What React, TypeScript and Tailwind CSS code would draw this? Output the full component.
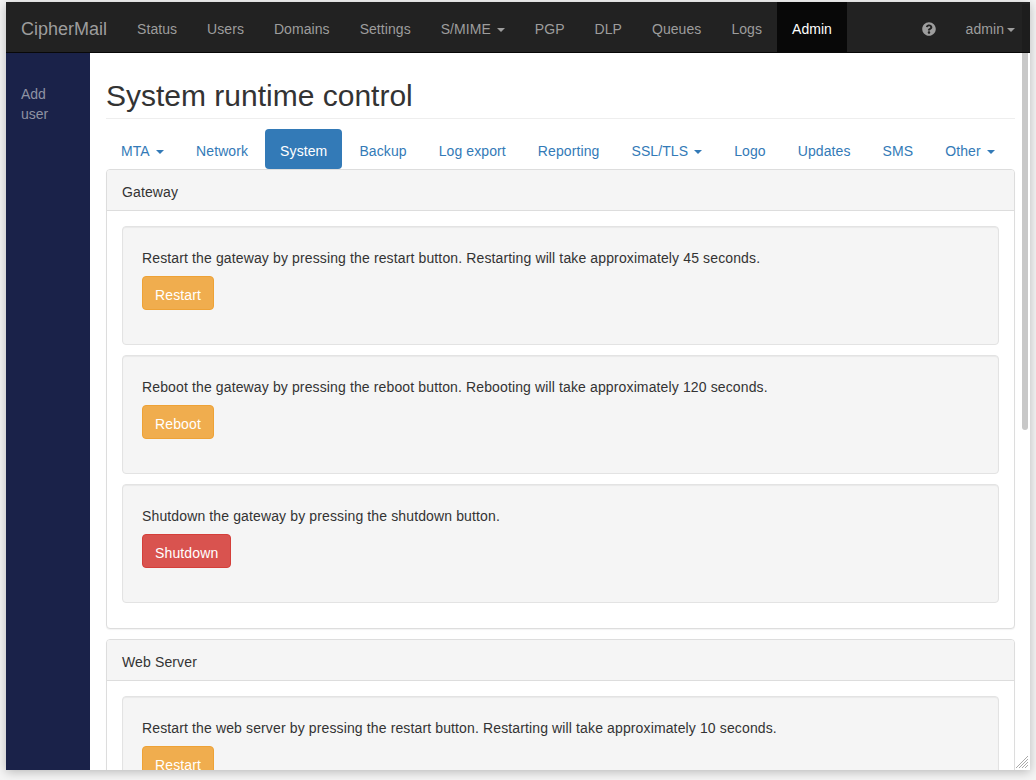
import React from 'react';
import { FaQuestionCircle } from 'react-icons/fa';

const navItems = [
  { label: 'Status' },
  { label: 'Users' },
  { label: 'Domains' },
  { label: 'Settings' },
  { label: 'S/MIME', caret: true },
  { label: 'PGP' },
  { label: 'DLP' },
  { label: 'Queues' },
  { label: 'Logs' },
  { label: 'Admin', active: true },
];

const tabs = [
  { label: 'MTA', caret: true, wide: true },
  { label: 'Network' },
  { label: 'System', active: true },
  { label: 'Backup' },
  { label: 'Log export' },
  { label: 'Reporting' },
  { label: 'SSL/TLS', caret: true },
  { label: 'Logo' },
  { label: 'Updates' },
  { label: 'SMS' },
  { label: 'Other', caret: true },
];

const gatewayActions = [
  { text: 'Restart the gateway by pressing the restart button. Restarting will take approximately 45 seconds.', button: 'Restart' },
  { text: 'Reboot the gateway by pressing the reboot button. Rebooting will take approximately 120 seconds.', button: 'Reboot' },
  { text: 'Shutdown the gateway by pressing the shutdown button.', button: 'Shutdown', danger: true },
];

function Caret({ wide }: { wide?: boolean }) {
  return (
    <span
      className={
        wide
          ? 'ml-[3px] inline-block h-0 w-0 border-x-4 border-t-4 border-x-transparent border-t-current align-middle'
          : 'ml-[2px] inline-block h-0 w-0 border-x-4 border-t-4 border-x-transparent border-t-current align-middle'
      }
    />
  );
}

function ActionWell({ text, button, danger }: { text: string; button: string; danger?: boolean }) {
  return (
    <div className="mb-[10px] rounded border border-[#e3e3e3] bg-[#f5f5f5] p-[19px] shadow-[inset_0_1px_1px_rgba(0,0,0,0.05)]">
      <p className="mb-[8px] pt-[2px] text-[#333]">{text}</p>
      <div className="mb-[15px]">
        <button
          className={
            danger
              ? 'h-[34px] rounded border border-[#d43f3a] bg-[#d9534f] px-3 pt-[4px] text-white'
              : 'h-[34px] rounded border border-[#eea236] bg-[#f0ad4e] px-3 pt-[4px] text-white'
          }
        >
          {button}
        </button>
      </div>
    </div>
  );
}

function Panel({ title, children }: { title: string; children: React.ReactNode }) {
  return (
    <div className="mb-[10px] rounded border border-[#ddd] bg-white shadow-[0_1px_1px_rgba(0,0,0,0.05)]">
      <div className="h-[41px] rounded-t-[3px] border-b border-[#ddd] bg-[#f5f5f5] px-[15px] pb-[8px] pt-[12px] text-[#333]">{title}</div>
      <div className="p-[15px]">{children}</div>
    </div>
  );
}

export default function App() {
  return (
    <div className="h-[780px] w-[1036px] overflow-hidden bg-[#f5f5f5] pl-[6px] pt-[2px] font-['Liberation_Sans',Arial,sans-serif] text-sm leading-5">
      <div className="relative flex h-[768px] w-[1024px] flex-col overflow-hidden bg-white shadow-[0_2px_10px_rgba(0,0,0,0.25)]">
        <nav className="flex h-[51px] shrink-0 border-b border-[#080808] bg-[#222] tracking-[0.06px] text-[#9d9d9d]">
          <div className="px-[15px] pb-[13px] pt-[17px] text-lg leading-5 tracking-normal">CipherMail</div>
          {navItems.map((item) => (
            <div key={item.label} className={item.active ? 'bg-[#080808] px-[15px] pb-[13px] pt-[17px] text-white' : 'px-[15px] pb-[13px] pt-[17px]'}>
              {item.label}
              {item.caret && <> <Caret /></>}
            </div>
          ))}
          <div className="ml-auto flex items-center px-[15px] pt-[4px]">
            <FaQuestionCircle className="text-[14px]" />
          </div>
          <div className="pb-[13px] pl-[15px] pr-[15px] pt-[17px]">
            admin
            <Caret wide />
          </div>
        </nav>
        <div className="flex min-h-0 flex-1">
          <aside className="w-[84px] shrink-0 bg-[#1a2249] px-[15px] pt-[31px] text-[#8f93a3]">Add user</aside>
          <main className="min-w-0 flex-1 pl-4 pr-[15px] tracking-[0.13px]">
            <div className="mb-[10px] mt-[26px] border-b border-[#eee] pb-[6px]">
              <h1 className="text-[30px] leading-[33px] tracking-normal text-[#333]">System runtime control</h1>
            </div>
            <div className="flex gap-[2px] tracking-[0.1px]">
              {tabs.map((tab) => (
                <a
                  key={tab.label}
                  className={
                    tab.active
                      ? 'h-[40px] rounded bg-[#337ab7] px-[15px] pb-[8px] pt-[12px] text-white'
                      : 'h-[40px] px-[15px] pb-[8px] pt-[12px] text-[#337ab7]'
                  }
                >
                  {tab.label}
                  {tab.caret && <> <Caret wide={tab.wide} /></>}
                </a>
              ))}
            </div>
            <Panel title="Gateway">
              {gatewayActions.map((action) => (
                <ActionWell key={action.button} {...action} />
              ))}
            </Panel>
            <Panel title="Web Server">
              <ActionWell text="Restart the web server by pressing the restart button. Restarting will take approximately 10 seconds." button="Restart" />
            </Panel>
          </main>
        </div>
        <div className="absolute right-0 top-[2px] h-[48px] w-[8px] bg-[#1d1d1d]" />
        <div className="absolute right-[2px] top-[51px] h-[377px] w-[6px] rounded-b-[3px] bg-[#c8c8c8]" />
        <svg className="absolute bottom-[1px] right-[1px]" width="14" height="14" viewBox="0 0 14 14" stroke="#aaa" strokeWidth="1">
          <path d="M13 1 L1 13 M13 4 L4 13 M13 7 L7 13 M13 10 L10 13" />
        </svg>
      </div>
    </div>
  );
}
